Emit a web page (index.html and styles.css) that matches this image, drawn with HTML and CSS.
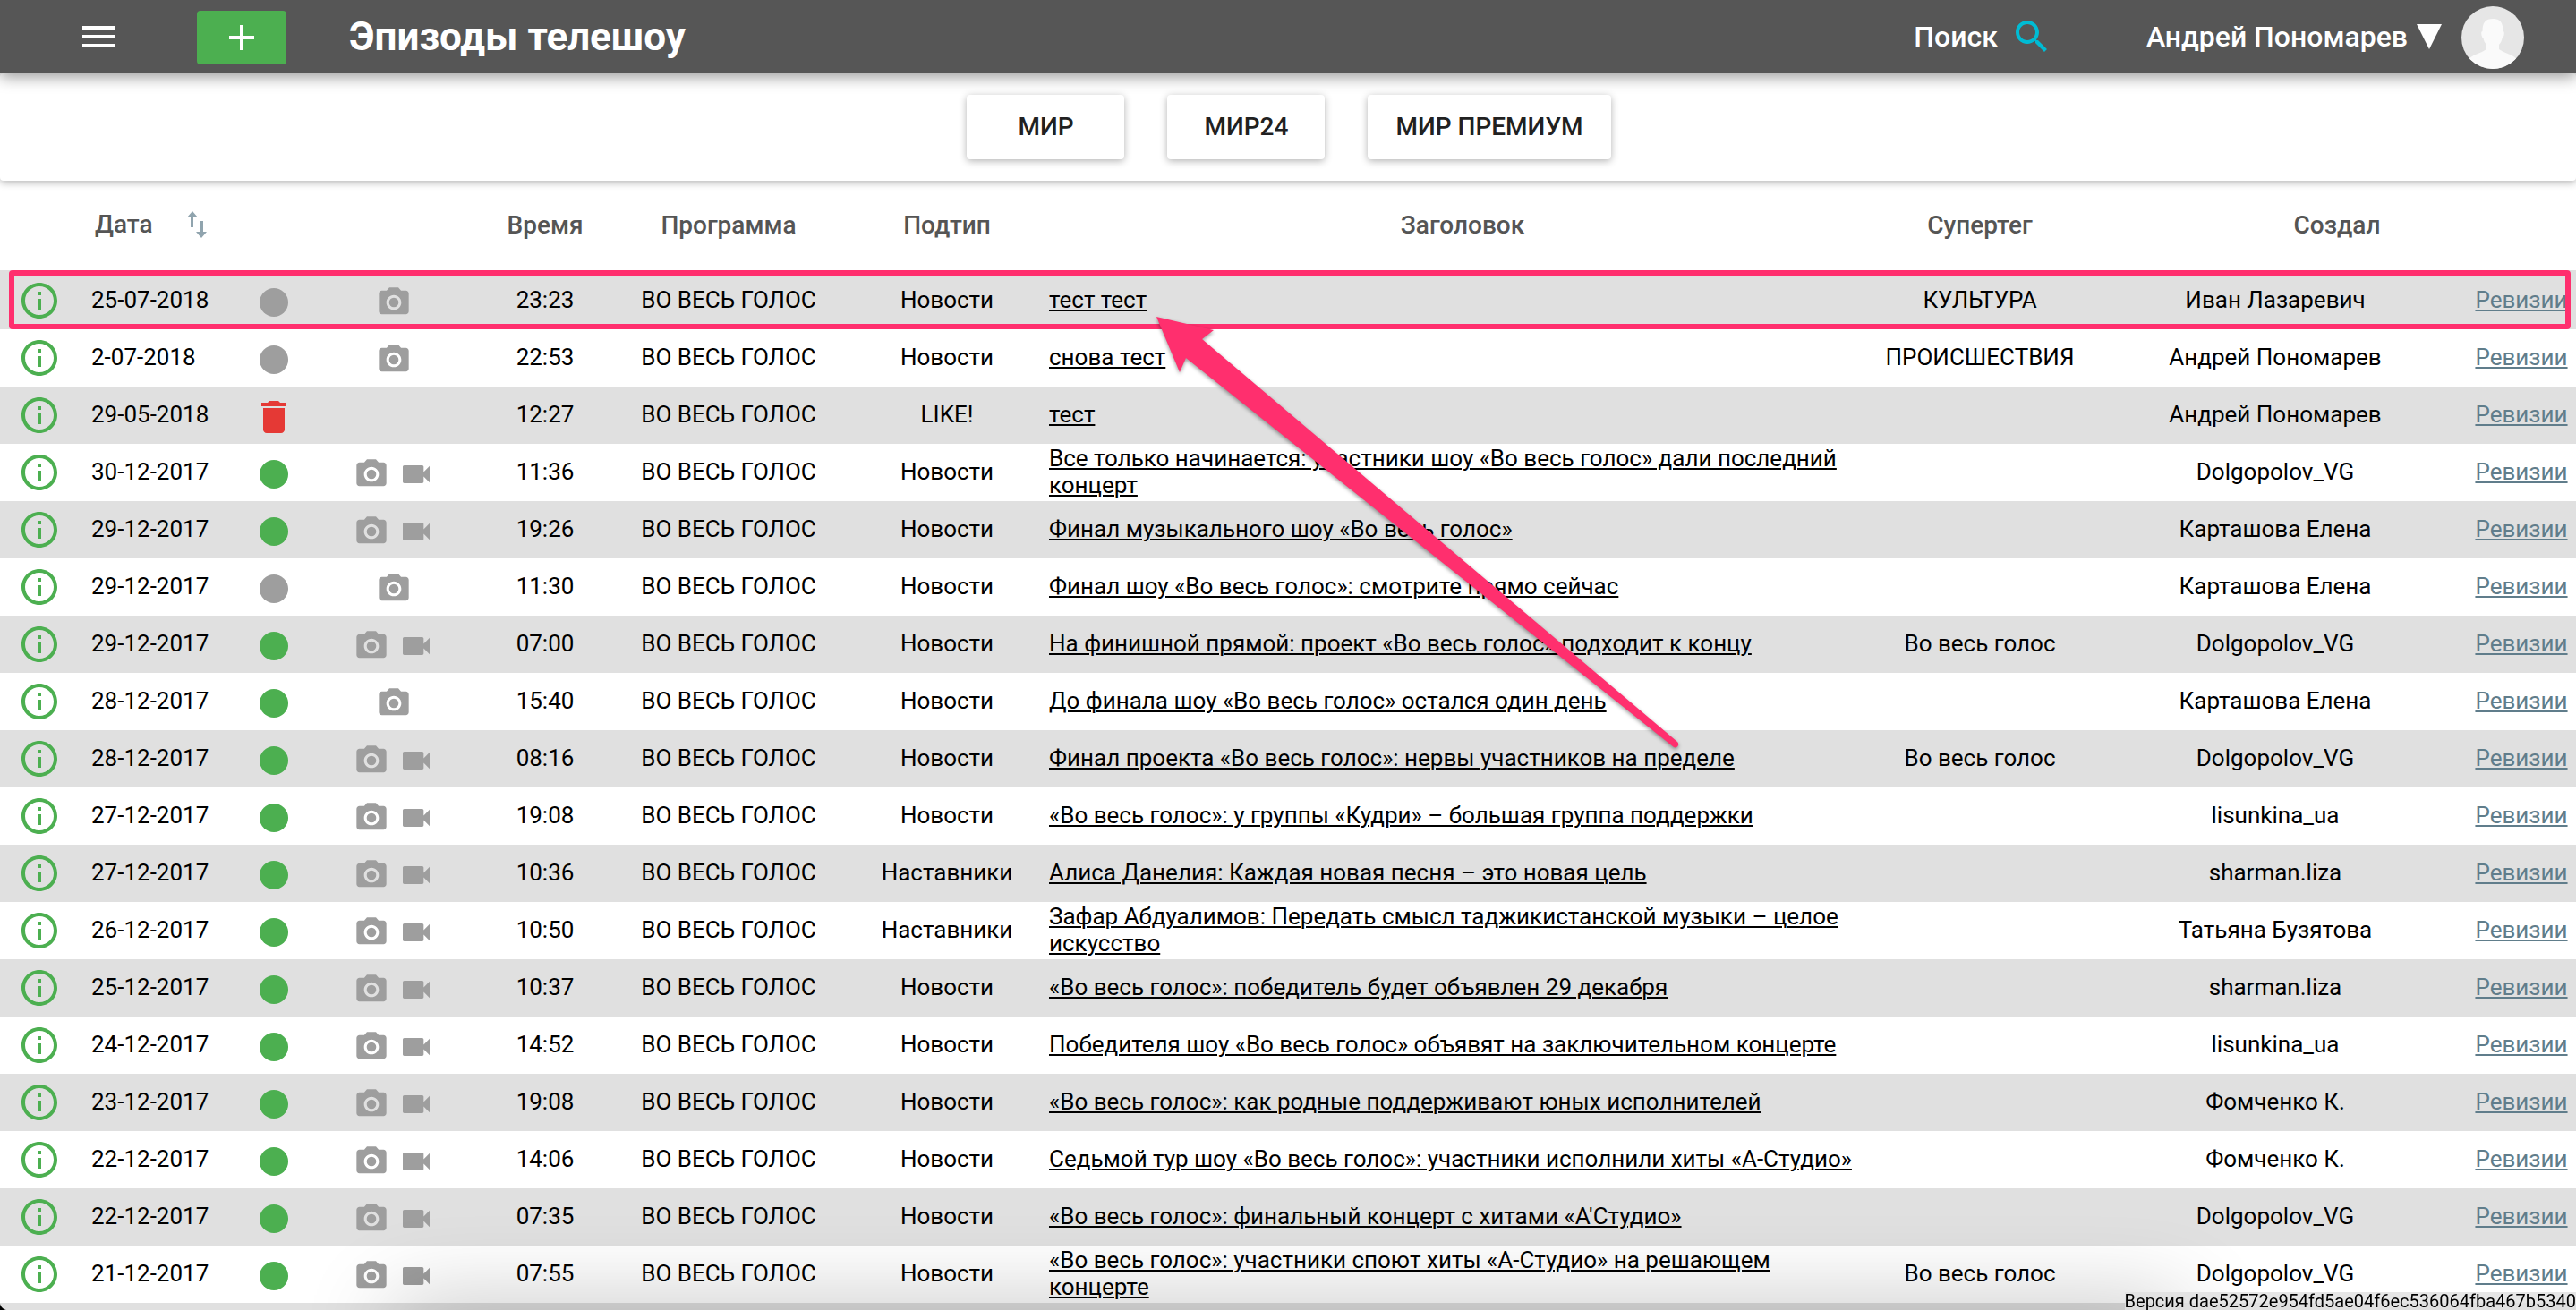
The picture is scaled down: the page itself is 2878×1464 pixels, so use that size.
FILE: index.html
```html
<!DOCTYPE html>
<html lang="ru">
<head>
<meta charset="utf-8">
<title>Эпизоды телешоу</title>
<link rel="stylesheet" href="styles.css">
</head>
<body>
<svg class="sprite" aria-hidden="true">
  <symbol id="info" viewBox="0 0 24 24"><path d="M11 17h2v-6h-2v6zm1-15C6.48 2 2 6.48 2 12s4.480 10 10 10 10-4.480 10-10S17.520 2 12 2zm0 18c-4.410 0-8-3.590-8-8s3.590-8 8-8 8 3.590 8 8-3.590 8-8 8zM11 9h2V7h-2v2z"/></symbol>
  <symbol id="camera" viewBox="0 0 24 24"><circle cx="12" cy="12" r="3.200"/><path d="M9 2 7.170 4H4c-1.100 0-2 .9-2 2v12c0 1.100.9 2 2 2h16c1.100 0 2-.9 2-2V6c0-1.100-.9-2-2-2h-3.170L15 2H9zm3 15c-2.760 0-5-2.240-5-5s2.240-5 5-5 5 2.240 5 5-2.240 5-5 5z"/></symbol>
  <symbol id="video" viewBox="0 0 24 24"><path d="M17 10.500V7c0-.55-.45-1-1-1H4c-.55 0-1 .45-1 1v10c0 .55.45 1 1 1h12c.55 0 1-.45 1-1v-3.500l4 4v-11l-4 4z"/></symbol>
  <symbol id="trash" viewBox="0 0 24 24"><path d="M6 19c0 1.100.9 2 2 2h8c1.100 0 2-.9 2-2V7H6v12zM19 4h-3.500l-1-1h-5l-1 1H5v2h14V4z"/></symbol>
  <symbol id="dot" viewBox="0 0 24 24"><circle cx="12" cy="12" r="8"/></symbol>
</svg>

<header class="topbar">
  <button class="icon-button menu" aria-label="Меню"><svg viewBox="0 0 24 24"><path d="M3 18h18v-2H3v2zm0-5h18v-2H3v2zm0-7v2h18V6H3z"/></svg></button>
  <button class="add" aria-label="Добавить"><svg viewBox="0 0 24 24"><path d="M19 13h-6v6h-2v-6H5v-2h6V5h2v6h6v2z"/></svg></button>
  <h1 class="page-title">Эпизоды телешоу</h1>
  <button class="search">Поиск <svg viewBox="0 0 24 24"><path d="M15.500 14h-.79l-.28-.27C15.410 12.590 16 11.110 16 9.500 16 5.910 13.090 3 9.500 3S3 5.910 3 9.500 5.910 16 9.500 16c1.610 0 3.090-.59 4.230-1.570l.27.28v.79l5 4.990L20.490 19l-4.990-5zm-6 0C7.010 14 5 11.990 5 9.500S7.010 5 9.500 5 14 7.010 14 9.500 11.990 14 9.500 14z"/></svg></button>
  <button class="user">Андрей Пономарев
    <svg class="caret" viewBox="0 0 28 28"><path d="M0 0h28L14 28z"/></svg>
    <svg class="avatar" viewBox="0 0 70 70"><clipPath id="round"><circle cx="35" cy="35" r="35"/></clipPath><g clip-path="url(#round)"><path class="avatar-bg" d="M0 0h70v70H0z"/><path class="avatar-figure" d="M35 14c8 0 11.500 4 11.500 14 1.500 0 1.500 2 1 4.500-.5 2-1 3-2 3-.5 3.500-1.500 5-3.500 7.500v5c3 2 7 4 11 5.500 4 1.500 8 4 11 8V72H6V61.500c3-4 7-6.500 11-8 4-1.500 8-3.500 11-5.500v-5c-2-2.500-3-4-3.500-7.500-1 0-1.500-1-2-3-.5-2.500-.5-4.500 1-4.500C23.500 18 27 14 35 14z"/></g></svg>
  </button>
</header>

<nav class="channels">
  <button class="channel">МИР</button>
  <button class="channel">МИР24</button>
  <button class="channel">МИР ПРЕМИУМ</button>
</nav>

<main class="content">
<table class="episodes">
  <colgroup><col class="c-info"><col class="c-date"><col class="c-status"><col class="c-media"><col class="c-time"><col class="c-program"><col class="c-subtype"><col class="c-title"><col class="c-tag"><col class="c-author"><col class="c-rev"></colgroup>
  <thead>
    <tr><th></th><th class="date"><span class="sortable">Дата <svg viewBox="0 0 22 30"><path d="M6 0 0 7h4v11h3V7h5zM16 30l6-7h-4V11h-3v12h-5z"/></svg></span></th><th></th><th></th><th>Время</th><th>Программа</th><th>Подтип</th><th>Заголовок</th><th>Супертег</th><th colspan="2" class="author">Создал</th></tr>
  </thead>
  <tbody id="rows"></tbody>
</table>
<div class="row-frame"></div>
<svg class="arrow" viewBox="0 0 600 500"><path d="M11 12 75 27 62 37 593 487C596 490 593 495 589 493L44 58 37 74z"/></svg>
</main>
<div class="toast"></div>
<div class="corner"></div>
<footer class="version">Версия dae52572e954fd5ae04f6ec536064fba467b5340</footer>
<script src="episodes.js"></script>
</body>
</html>
```
FILE: styles.css
```css
* { box-sizing: border-box; }
html, body { height: 100%; }
body {
  margin: 0;
  overflow: hidden;
  background: #fff;
  color: #000;
  font: 26px/30px Roboto, sans-serif;
}
button { font: inherit; border: 0; padding: 0; background: none; color: inherit; }
svg { fill: currentColor; display: block; }
a { text-decoration-thickness: 2px; text-underline-offset: 2px; }
.sprite { display: none; }

.topbar {
  position: relative;
  z-index: 2;
  display: flex;
  align-items: center;
  height: 82px;
  padding: 0 58px 0 86px;
  background: #565656;
  color: #fff;
  font-size: 32px;
  font-weight: 500;
  box-shadow: 0 4px 16px rgba(0, 0, 0, .4);
}
.menu svg, .add svg, .search svg { width: 48px; height: 48px; }
.add {
  display: flex;
  justify-content: center;
  align-items: center;
  width: 100px;
  height: 60px;
  margin: 2px 70px 0 86px;
  border-radius: 4px;
  background: #4caf50;
}
.page-title { margin: 0 auto 0 0; font-size: 44px; line-height: 52px; font-weight: 700; }
.search, .user { display: flex; align-items: center; }
.search { gap: 14px; margin-right: 104px; }
.search svg { fill: #00bcd4; }
.user { gap: 10px; }
.caret { width: 28px; height: 28px; }
.avatar { width: 70px; height: 70px; margin: 2px 0 0 12px; }
.avatar-bg { fill: #e6e6e6; }
.avatar-figure { fill: #fafafa; }

.channels {
  position: relative;
  z-index: 1;
  display: flex;
  justify-content: center;
  gap: 48px;
  padding: 24px 24px 24px 26px;
  background: #fff;
  border-radius: 4px;
  box-shadow: 0 2px 8px rgba(0, 0, 0, .3);
}
.channel {
  min-width: 176px;
  height: 72px;
  padding: 0 31px;
  border-radius: 4px;
  background: #fff;
  color: #212121;
  font-size: 28px;
  font-weight: 500;
  box-shadow: 0 2px 8px rgba(0, 0, 0, .3);
}

.content { position: relative; }
.episodes { width: 100%; table-layout: fixed; border-collapse: collapse; }
.c-info { width: 88px; }
.c-date { width: 178px; }
.c-status { width: 80px; }
.c-media { width: 188px; }
.c-time { width: 150px; }
.c-program { width: 260px; }
.c-subtype { width: 228px; }
.c-tag { width: 232px; }
.c-author { width: 428px; }
.c-rev { width: 122px; }
th { height: 100px; padding: 0; color: #555; font-size: 28px; font-weight: 500; }
td { height: 64px; padding: 0 0 2px; text-align: center; }
tbody tr:nth-child(odd) { background: #e0e0e0; }
.date { padding-left: 14px; text-align: left; }
th.date { padding-left: 18px; padding-bottom: 2px; }
th.author { padding-left: 16px; }
.sortable { display: flex; align-items: center; gap: 38px; }
.sortable svg { width: 22px; height: 30px; fill: #90a4ae; }
.title { padding-right: 16px; text-align: left; }
.title a { color: #000; }
.rev a { color: #607d8b; }
.info { width: 48px; height: 48px; margin: 0 auto; fill: #4caf50; }
.info-cell { padding-bottom: 0; }
.icon-cell { padding: 4px 0 0; }
tbody tr:first-child td { height: 66px; padding-top: 2px; }
tbody tr:first-child .icon-cell { padding-top: 6px; }
.status { width: 48px; height: 48px; margin: 0 auto; }
.published { fill: #4caf50; }
.draft { fill: #9e9e9e; }
.deleted { fill: #e53935; }
.media { display: flex; justify-content: center; gap: 10px; }
.media svg { width: 40px; height: 40px; fill: #9e9e9e; }

.row-frame {
  position: absolute;
  top: 100px;
  left: 10px;
  right: 6px;
  height: 66px;
  border: 6px solid #ff2f6e;
  border-radius: 4px;
}
.arrow {
  position: absolute;
  top: 140px;
  left: 1281px;
  width: 600px;
  height: 500px;
  fill: #ff2f6e;
  filter: drop-shadow(0 2px 2px rgba(0, 0, 0, .4));
}
.toast {
  position: fixed;
  left: 440px;
  right: 440px;
  bottom: -60px;
  height: 60px;
  box-shadow: 0 0 100px rgba(0, 0, 0, .3);
}
.corner {
  position: fixed;
  left: 0;
  bottom: 0;
  width: 10px;
  height: 10px;
  background: radial-gradient(circle at top right, transparent 10px, #000 11px);
}
.version {
  position: fixed;
  right: 0;
  bottom: 0;
  background: rgba(224, 224, 224, .8);
  font-size: 20px;
  line-height: 20px;
  white-space: nowrap;
}
```
FILE: episodes.js
```js
// [date, status, media, time, subtype, title, supertag, author]
const episodes = [
  ["25-07-2018", "draft", "p", "23:23", "Новости", "тест тест", "КУЛЬТУРА", "Иван Лазаревич"],
  ["2-07-2018", "draft", "p", "22:53", "Новости", "снова тест", "ПРОИСШЕСТВИЯ", "Андрей Пономарев"],
  ["29-05-2018", "deleted", "", "12:27", "LIKE!", "тест", "", "Андрей Пономарев"],
  ["30-12-2017", "published", "pv", "11:36", "Новости", "Все только начинается: участники шоу «Во весь голос» дали последний концерт", "", "Dolgopolov_VG"],
  ["29-12-2017", "published", "pv", "19:26", "Новости", "Финал музыкального шоу «Во весь голос»", "", "Карташова Елена"],
  ["29-12-2017", "draft", "p", "11:30", "Новости", "Финал шоу «Во весь голос»: смотрите прямо сейчас", "", "Карташова Елена"],
  ["29-12-2017", "published", "pv", "07:00", "Новости", "На финишной прямой: проект «Во весь голос» подходит к концу", "Во весь голос", "Dolgopolov_VG"],
  ["28-12-2017", "published", "p", "15:40", "Новости", "До финала шоу «Во весь голос» остался один день", "", "Карташова Елена"],
  ["28-12-2017", "published", "pv", "08:16", "Новости", "Финал проекта «Во весь голос»: нервы участников на пределе", "Во весь голос", "Dolgopolov_VG"],
  ["27-12-2017", "published", "pv", "19:08", "Новости", "«Во весь голос»: у группы «Кудри» – большая группа поддержки", "", "lisunkina_ua"],
  ["27-12-2017", "published", "pv", "10:36", "Наставники", "Алиса Данелия: Каждая новая песня – это новая цель", "", "sharman.liza"],
  ["26-12-2017", "published", "pv", "10:50", "Наставники", "Зафар Абдуалимов: Передать смысл таджикистанской музыки – целое искусство", "", "Татьяна Бузятова"],
  ["25-12-2017", "published", "pv", "10:37", "Новости", "«Во весь голос»: победитель будет объявлен 29 декабря", "", "sharman.liza"],
  ["24-12-2017", "published", "pv", "14:52", "Новости", "Победителя шоу «Во весь голос» объявят на заключительном концерте", "", "lisunkina_ua"],
  ["23-12-2017", "published", "pv", "19:08", "Новости", "«Во весь голос»: как родные поддерживают юных исполнителей", "", "Фомченко К."],
  ["22-12-2017", "published", "pv", "14:06", "Новости", "Седьмой тур шоу «Во весь голос»: участники исполнили хиты «А-Студио»", "", "Фомченко К."],
  ["22-12-2017", "published", "pv", "07:35", "Новости", "«Во весь голос»: финальный концерт с хитами «А'Студио»", "", "Dolgopolov_VG"],
  ["21-12-2017", "published", "pv", "07:55", "Новости", "«Во весь голос»: участники споют хиты «А-Студио» на решающем концерте", "Во весь голос", "Dolgopolov_VG"]
];
const icon = (id, cls = "") => `<svg class="${cls}"><use href="#${id}"/></svg>`;
document.getElementById("rows").innerHTML = episodes.map(([date, status, media, time, subtype, title, tag, author]) => `
  <tr>
    <td class="info-cell">${icon("info", "info")}</td>
    <td class="date">${date}</td>
    <td class="icon-cell">${icon(status === "deleted" ? "trash" : "dot", "status " + status)}</td>
    <td class="icon-cell"><div class="media">${media.includes("p") ? icon("camera") : ""}${media.includes("v") ? icon("video") : ""}</div></td>
    <td>${time}</td>
    <td>ВО ВЕСЬ ГОЛОС</td>
    <td>${subtype}</td>
    <td class="title"><a href="#">${title}</a></td>
    <td>${tag}</td>
    <td>${author}</td>
    <td class="rev"><a href="#">Ревизии</a></td>
  </tr>`).join("") + '<tr><td colspan="11"></td></tr>';
```
